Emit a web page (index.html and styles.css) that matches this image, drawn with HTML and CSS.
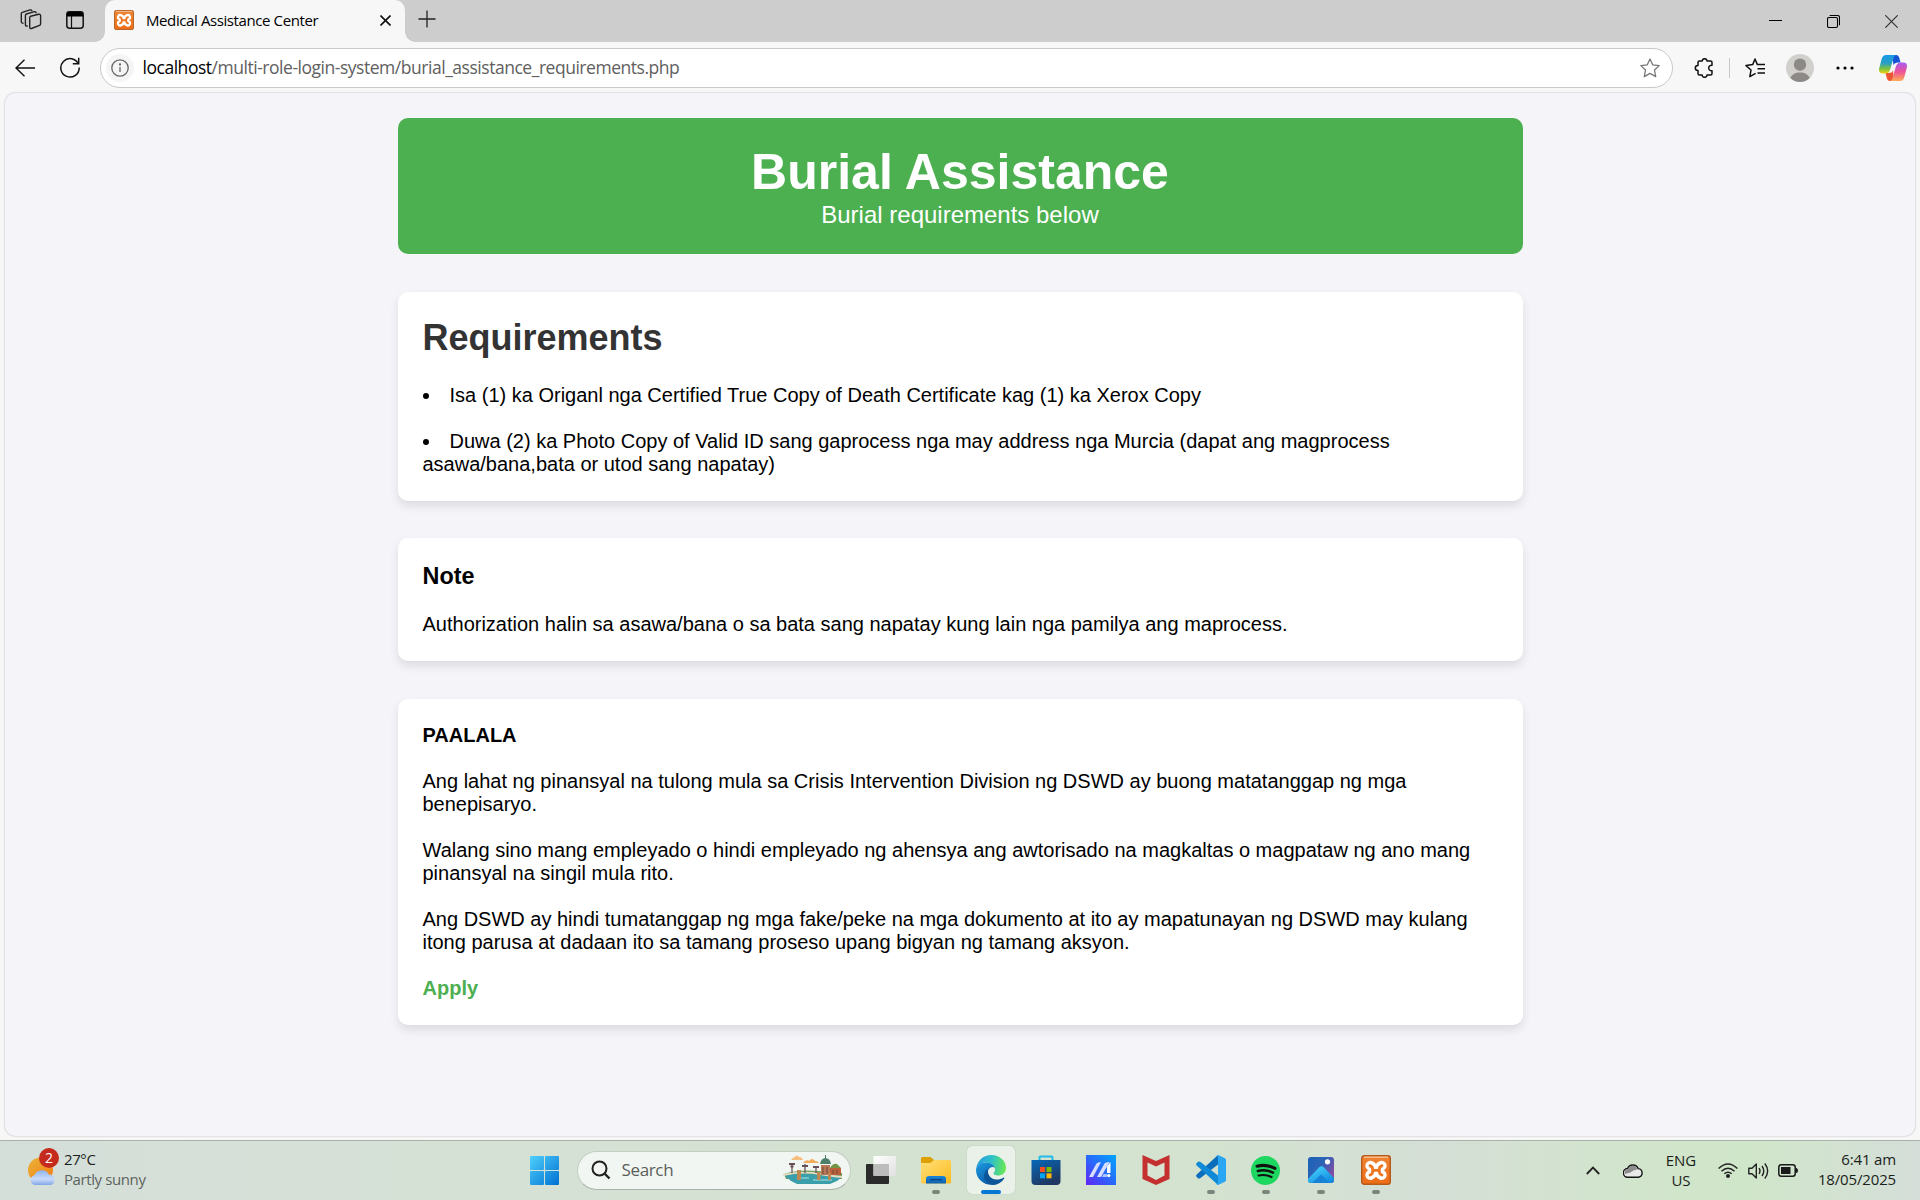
FILE: index.html
```html
<!DOCTYPE html>
<html lang="en">
<head>
<meta charset="utf-8">
<title>Medical Assistance Center</title>
<link rel="stylesheet" href="styles.css">
</head>
<body>
<svg class="defs" aria-hidden="true">
  <defs>
    <linearGradient id="orange" x1="0" y1="0" x2="0" y2="1"><stop offset="0" stop-color="#ee8433"/><stop offset="1" stop-color="#ee6c16"/></linearGradient>
    <symbol id="xampp" viewBox="0 0 30 30">
      <rect x=".7" y=".7" width="28.6" height="28.6" rx="2.5" fill="url(#orange)" stroke="#b65a1c" stroke-width="1.4"/>
      <path d="M3 2.2H27" stroke="#f8c092" stroke-width="1.4"/>
      <path d="M9.300 10.700Q12 11.700 11.800 15.300 12 19 9.300 20M20.700 10.700Q18 11.700 18.200 15.300 18 19 20.700 20M11.800 15.300H18.200" fill="none" stroke="#fff" stroke-width="10" stroke-linecap="round" stroke-linejoin="round"/>
      <path d="M9 10.700Q12 11.700 11.800 15.300 12 19 9 20M21 10.700Q18 11.700 18.200 15.300 18 19 21 20M11.800 15.300H18.200" fill="none" stroke="#ee7722" stroke-width="2.800" stroke-linecap="round" stroke-linejoin="round"/>
    </symbol>
  </defs>
</svg>

<div class="titlebar">
  <svg class="workspaces" width="22" height="22" viewBox="0 0 22 22" fill="none" stroke="#222" stroke-width="1.4" stroke-linejoin="round" stroke-linecap="round">
    <path d="M10.500 7.300 18.800 5.200q1.700-.2 1.800 1.400V14.700q0 1.200-1 1.600L11.400 19.500q-1.600.4-1.700-1.200V8.600q0-1 .8-1.300Z"/>
    <path d="M7.200 17q-1.700.3-1.800-1.300V6.400q0-1 1-1.400L14.400 2.700q1.400-.2 1.800 1"/>
    <path d="M3 14.300q-1.600 0-1.700-1.500V4.800q0-1.200 1-1.500L10 .9q1.500-.2 1.900.8"/>
  </svg>
  <svg class="tab-actions" width="18" height="18" viewBox="0 0 18 18"><rect x=".8" y=".8" width="16.400" height="16.400" rx="2.700" fill="none" stroke="#111" stroke-width="1.500"/><path d="M1 5.500V3a2 2 0 0 1 2-2H15a2 2 0 0 1 2 2V5.500Z" fill="#000"/><path d="M5.500 5V17" stroke="#111" stroke-width="1.200"/></svg>
  <div class="tab">
    <svg width="20" height="20"><use href="#xampp"/></svg>
    <span class="tab-title">Medical Assistance Center</span>
    <svg width="11" height="11" viewBox="0 0 11 11" stroke="#111" stroke-width="1.600"><path d="M.5.5 10.500 10.500M10.500.5.5 10.500"/></svg>
  </div>
  <svg class="new-tab" width="18" height="18" viewBox="0 0 18 18" stroke="#222" stroke-width="1.300"><path d="M9 .5V17.500M.5 9H17.500"/></svg>
  <div class="window-buttons">
    <svg width="13" height="13" viewBox="0 0 13 13" stroke="#000" stroke-width="1"><path d="M0 5.500H13"/></svg>
    <svg width="13" height="13" viewBox="0 0 13 13" fill="none" stroke="#000" stroke-width="1.100"><rect x=".5" y="2.500" width="10" height="10" rx="1.500"/><path d="M2.700.5H10.500a2 2 0 0 1 2 2V10.300"/></svg>
    <svg width="13" height="13" viewBox="0 0 13 13" stroke="#333" stroke-width="1.200"><path d="M.3.3 12.700 12.700M12.700.3.300 12.700"/></svg>
  </div>
</div>

<div class="toolbar">
  <svg class="back" width="20" height="18" viewBox="0 0 20 18" fill="none" stroke="#111" stroke-width="1.400"><path d="M9.500.7 1 9 9.500 17.300M1 9H20"/></svg>
  <svg class="reload" width="20" height="21" viewBox="0 0 20 21" fill="none" stroke="#111" stroke-width="1.500"><path d="M18.500 7.300A9.200 9.200 0 1 0 19.200 10.500M18.700.8V6.700H12.800"/></svg>
  <div class="address">
    <span class="site-info"><svg width="18" height="18" viewBox="0 0 18 18" fill="none" stroke="#666" stroke-width="1.300"><circle cx="9" cy="9" r="8.200"/><path d="M9 8V13"/><circle cx="9" cy="5.500" r=".5"/></svg></span>
    <span class="url"><b>localhost</b>/multi-role-login-system/burial_assistance_requirements.php</span>
    <svg class="star" width="20" height="20" viewBox="0 0 20 20" fill="none" stroke="#777" stroke-width="1.300" stroke-linejoin="round"><path d="M10 1 12.700 6.800 19.200 7.600 14.500 12 15.700 18.600 10 15.400 4.300 18.600 5.500 12 .8 7.600 7.300 6.800Z"/></svg>
  </div>
  <svg class="extensions" width="20" height="20" viewBox="0 0 20 20" fill="none" stroke="#111" stroke-width="1.500" stroke-linejoin="round"><path d="M5.500 3H8.200C8.200-.1 13-.1 13 3H16.500Q18 3 18 4.500V7.300C13.600 7 13.600 13 18 12.700V15.500Q18 17 16.500 17H13C13 20.100 8.200 20.100 8.200 17H5.500Q4 17 4 15.500V12.500C.4 12.500.4 7.500 4 7.500V4.500Q4 3 5.500 3Z"/></svg>
  <span class="divider"></span>
  <svg class="favorites" width="21" height="20" viewBox="0 0 21 20" fill="none" stroke="#111" stroke-width="1.500" stroke-linejoin="round"><path d="M10.600 15.300 4.900 18.600 6 12 1 7.600 7.700 6.600 10 1 12.400 6.600H20M12.500 10.700H20M12.500 15H20"/></svg>
  <svg class="avatar" width="28" height="28" viewBox="0 0 28 28"><circle cx="14" cy="14" r="14" fill="#d2d0cd"/><circle cx="14" cy="10.700" r="6.200" fill="#8c8986"/><path d="M4.300 24C6 20.500 9 18.500 14 18.500S22 20.500 23.700 24A14 14 0 0 1 4.300 24Z" fill="#8c8986"/></svg>
  <svg class="more" width="18" height="4" viewBox="0 0 18 4"><circle cx="2" cy="2" r="1.600"/><circle cx="9" cy="2" r="1.600"/><circle cx="16" cy="2" r="1.600"/></svg>
  <svg class="copilot" width="28" height="26" viewBox="0 0 28 26">
    <defs>
      <linearGradient id="c1" x1="0" y1="0" x2="0" y2="1"><stop offset="0" stop-color="#1699e8"/><stop offset=".45" stop-color="#2b9fc4"/><stop offset=".75" stop-color="#7fc43b"/><stop offset="1" stop-color="#f4cf19"/></linearGradient>
      <linearGradient id="c2" x1="0" y1="0" x2="0" y2="1"><stop offset="0" stop-color="#a65df2"/><stop offset=".5" stop-color="#ec5397"/><stop offset="1" stop-color="#ffad55"/></linearGradient>
    </defs>
    <path d="M13 0H17.500Q19.500.2 20.200 2.400L21.500 7.500H18.500Q15.500 7.500 14.500 10Z" fill="#1554d4"/>
    <path d="M15 26H11Q8.500 26 7.900 23.500L6.500 18H10Q13 18 14 15.500Z" fill="#ec5632"/>
    <path d="M7 0H17Q15 .5 14.500 3L11.300 14Q10 18.500 6.500 18.500H3.500Q-1 18 .3 13L2.500 4.500Q3.600 0 7 0Z" fill="url(#c1)"/>
    <path d="M21 26H11Q13 25.500 13.500 23L16.700 12Q18 7.500 21.500 7.500H24.500Q29 8 27.700 13L25.500 21.500Q24.400 26 21 26Z" fill="url(#c2)"/>
  </svg>
</div>

<div class="viewport">
  <main class="container">
    <header class="banner">
      <h1>Burial Assistance</h1>
      <p>Burial requirements below</p>
    </header>
    <section class="card">
      <h2>Requirements</h2>
      <ul>
        <li>Isa (1) ka Origanl nga Certified True Copy of Death Certificate kag (1) ka Xerox Copy</li>
        <li>Duwa (2) ka Photo Copy of Valid ID sang gaprocess nga may address nga Murcia (dapat ang magprocess asawa/bana,bata or utod sang napatay)</li>
      </ul>
    </section>
    <section class="card">
      <h3>Note</h3>
      <p>Authorization halin sa asawa/bana o sa bata sang napatay kung lain nga pamilya ang maprocess.</p>
    </section>
    <section class="card">
      <h4>PAALALA</h4>
      <p>Ang lahat ng pinansyal na tulong mula sa Crisis Intervention Division ng DSWD ay buong matatanggap ng mga benepisaryo.</p>
      <p>Walang sino mang empleyado o hindi empleyado ng ahensya ang awtorisado na magkaltas o magpataw ng ano mang pinansyal na singil mula rito.</p>
      <p>Ang DSWD ay hindi tumatanggap ng mga fake/peke na mga dokumento at ito ay mapatunayan ng DSWD may kulang itong parusa at dadaan ito sa tamang proseso upang bigyan ng tamang aksyon.</p>
      <a class="apply">Apply</a>
    </section>
  </main>
</div>

<footer class="taskbar">
  <div class="weather">
    <div class="weather-icon">
      <svg width="28" height="28" viewBox="0 0 28 28">
        <defs><linearGradient id="sun" x1="0" y1="0" x2="1" y2="1"><stop offset="0" stop-color="#e9b53a"/><stop offset="1" stop-color="#f57a12"/></linearGradient><linearGradient id="cl" x1="0" y1="0" x2="0" y2="1"><stop offset="0" stop-color="#8fb4f0"/><stop offset=".6" stop-color="#cadcfa"/><stop offset="1" stop-color="#82a6e8"/></linearGradient></defs>
        <circle cx="12.500" cy="13" r="12.500" fill="url(#sun)"/>
        <path d="M7 28a5 5 0 0 1-.5-9.800 8 8 0 0 1 14.500-.6A5.300 5.300 0 0 1 22.500 28Z" fill="url(#cl)"/>
      </svg>
      <span class="badge">2</span>
    </div>
    <div class="weather-text"><span>27°C</span><span class="muted">Partly sunny</span></div>
  </div>

  <div class="apps">
    <div class="slot start">
      <svg width="29" height="29" viewBox="0 0 29 29"><defs><linearGradient id="win" gradientUnits="userSpaceOnUse" x1="0" y1="0" x2="29" y2="29"><stop offset="0" stop-color="#4fd0fc"/><stop offset="1" stop-color="#0070d2"/></linearGradient></defs><g fill="url(#win)"><rect width="14" height="14" rx="1"/><rect x="15" width="14" height="14" rx="1"/><rect y="15" width="14" height="14" rx="1"/><rect x="15" y="15" width="14" height="14" rx="1"/></g></svg>
    </div>
    <div class="search">
      <svg width="20" height="20" viewBox="0 0 20 20" fill="none" stroke="#222" stroke-width="2"><circle cx="8.500" cy="8.500" r="7"/><path d="M13.500 13.500 18.500 18.500" stroke-width="2.400"/></svg>
      <span>Search</span>
      <svg class="scene" width="60" height="30" viewBox="0 0 60 30">
        <path d="M8 5q2-3 4-3 1-3 4 0 3 0 4 3Z" fill="#f6bd7c"/><path d="M20 8q3-4 6-2 3-4 6 0 3 0 4 2Z" fill="#f5aa59"/>
        <path d="M1 19Q15 14 35 16L59 18V24H3Z" fill="#6f9d5a"/>
        <path d="M2 21Q12 17 27 19L59 22 54 26 47 29H14L8 26Z" fill="#3b9fab"/><path d="M14 23H26M30 25H49" stroke="#83ced0" stroke-width="1.500"/>
        <path d="M0 20Q19 16 37 19T59 22" fill="none" stroke="#e4dcc5" stroke-width="1.800"/>
        <path d="M9 9V18M22 9V18M33 12V18" stroke="#655" stroke-width="1.300"/><path d="M6 9H12M7.500 11.500H10.500M19 11H25M30 12H36" stroke="#655059" stroke-width="2.200"/>
        <path d="M38 10H47V20H38Z" fill="#ba7956"/><path d="M37 9Q38 3 42.500 3T48 9Z" fill="#4d806a"/><path d="M42.500 0V4" stroke="#4d806a"/><path d="M47 13H58V20H47Z" fill="#bd6039"/><path d="M47 13Q50 8 54 9L58 13Z" fill="#739345"/><path d="M40 12V19M44 12V19M50 15V19M54 15V19" stroke="#6b4841"/>
        <path d="M14 15h4v10h-4ZM34 17h3.500v8H34ZM45 18h3v7h-3Z" fill="#bc8953"/>
      </svg>
    </div>
    <div class="slot first-app">
      <svg width="30" height="30" viewBox="0 0 30 30"><defs><linearGradient id="tv" x1="0" y1="0" x2="1" y2="1"><stop offset="0" stop-color="#fff"/><stop offset="1" stop-color="#e0e0e0"/></linearGradient></defs><rect y="9" width="23" height="20" rx="1" fill="#2b2b2b"/><rect x="7.500" y="1" width="22.500" height="20" rx="1" fill="url(#tv)"/><path d="M7.500 9H23V21H7.500Z" fill="#bcbcbc"/></svg>
    </div>
    <div class="slot running">
      <svg width="30" height="30" viewBox="0 0 30 30"><defs><linearGradient id="fo" x1="0" y1="0" x2="1" y2="1"><stop offset="0" stop-color="#ffe07a"/><stop offset="1" stop-color="#fdbb1e"/></linearGradient><linearGradient id="fb" x1="0" y1="0" x2="0" y2="1"><stop offset="0" stop-color="#1784d8"/><stop offset="1" stop-color="#0f62b0"/></linearGradient></defs><path d="M0 3.500A1.500 1.500 0 0 1 1.500 2H9.500L13 5H28V14H0Z" fill="#dfa006"/><path d="M0 8H9.500L13 5H28.500Q30 5 30 6.500V28.500H1.500Q0 28.500 0 27Z" fill="url(#fo)"/><path d="M5 28.500V24a3 3 0 0 1 3-3H22a3 3 0 0 1 3 3V28.500Z" fill="url(#fb)"/><path d="M9 24.700H21" stroke="#0b3f78" stroke-width="1.200"/></svg>
    </div>
    <div class="slot running active">
      <svg width="30" height="30" viewBox="0 0 30 30"><defs><linearGradient id="e1" x1="0" y1=".5" x2="1" y2=".6"><stop offset="0" stop-color="#269bdc"/><stop offset=".5" stop-color="#2fc1c8"/><stop offset="1" stop-color="#6bea4d"/></linearGradient><linearGradient id="e2" x1="0" y1="0" x2=".6" y2="1"><stop offset="0" stop-color="#1b9de2"/><stop offset="1" stop-color="#0b59a8"/></linearGradient></defs>
        <path d="M.2 13.500C1.500 5 8 0 15 0 24 0 30 6 30 13 30 18 26 20.500 22 20.500 19 20.500 17.300 19.500 17.500 18.300 17.700 17.500 19 16.800 19 14.500 19 11.500 15.500 7.500 9.500 7.500 5.500 7.500 2 9.700.2 13.500Z" fill="url(#e1)"/>
        <path d="M9.500 7.500C15 7.500 18 10.500 18.700 12.700 16 10.800 12 13.500 11.500 17.500 11 23 16 28 19.500 29.200 10 32 0 25 0 15 0 11 4.500 7.500 9.500 7.500Z" fill="url(#e2)"/>
        <path d="M12.500 13.700C10.500 18 14 24.500 20.500 24.500 23.500 24.500 25.700 23.600 27.400 22.700 28.200 22.300 28.600 23 28.200 23.600 26 27 22 30 17 30 11 29 7 24 8.500 18.700 9.100 16.500 10.500 14.800 12.500 13.700Z" fill="#0c5598"/></svg>
    </div>
    <div class="slot">
      <svg width="30" height="30" viewBox="0 0 30 30"><defs><linearGradient id="st" x1="0" y1="0" x2=".5" y2="1"><stop offset="0" stop-color="#0668b8"/><stop offset="1" stop-color="#203761"/></linearGradient></defs><path d="M8.500 7V2.500Q8.500 1.500 9.500 1.500H20.500Q21.500 1.500 21.500 2.500V7" fill="none" stroke="#21bbe9" stroke-width="2"/><path d="M.5 5H29.500V26q0 4-4 4H4.500q-4 0-4-4Z" fill="url(#st)"/><path d="M9 12h5v5H9Z" fill="#f25022"/><path d="M15.500 12h5v5h-5Z" fill="#7fba00"/><path d="M9 18.300h5v5H9Z" fill="#00a4ef"/><path d="M15.500 18.300h5v5h-5Z" fill="#ffb900"/></svg>
    </div>
    <div class="slot">
      <svg width="30" height="30" viewBox="0 0 30 30"><defs><linearGradient id="ma" x1="0" y1="1" x2="1" y2="0"><stop offset="0" stop-color="#6324f5"/><stop offset=".55" stop-color="#2370fb"/><stop offset="1" stop-color="#02a5ff"/></linearGradient></defs><rect width="30" height="30" fill="url(#ma)"/><path d="M3 22 10.500 8.500Q12 7 15 7L7 22ZM11 22 18.500 8.500Q20.500 6.500 23.500 7L15 22Z" fill="#d9ddff"/><path d="M21 11.500 24.500 7V18H21Z" fill="#fff"/><path d="M17.500 19h3.500v3h-5Z" fill="#a9c5ff"/><circle cx="22.800" cy="20.600" r="1.600" fill="#fff"/></svg>
    </div>
    <div class="slot">
      <svg width="28" height="30" viewBox="0 0 28 30"><path d="M.5 0 14 6 27.500 0V24L14 30 .5 24Z" fill="#c4302f"/><path d="M5.500 7.500 14 11.500 22.500 7.500V20.500L14 25 5.500 20.500Z" fill="#d7e4d2"/></svg>
    </div>
    <div class="slot running">
      <svg width="30" height="30" viewBox="0 0 30 30"><path d="M22 0 24 8 4.500 23Q3 24 1.700 23L.5 21.800Q-.3 20.700.7 19.500Z" fill="#0a6ebd"/><path d="M22 30 24 22 4.500 7Q3 6 1.700 7L.5 8.200Q-.3 9.300.7 10.500Z" fill="#1089d6"/><path d="M22 0 29 3.200Q30 3.800 30 5V25Q30 26.200 29 26.800L22 30Q21.200 30 20.500 29 22 29 22 27V3Q22 1 20.500 1 21.200 0 22 0Z" fill="#2ba6f3"/></svg>
    </div>
    <div class="slot running">
      <svg width="29" height="29" viewBox="0 0 29 29" fill="none" stroke="#111" stroke-linecap="round"><circle cx="14.500" cy="14.500" r="14.500" fill="#1ed760" stroke="none"/><path d="M6 10.200Q15.500 7.800 24 12.400" stroke-width="3"/><path d="M6.800 15Q15 13 22 16.700" stroke-width="2.500"/><path d="M7.500 19.500Q14.500 17.800 20.500 21" stroke-width="2"/></svg>
    </div>
    <div class="slot running">
      <svg width="26" height="26" viewBox="0 0 26 26"><defs><linearGradient id="p1" x1="0" y1="0" x2="1" y2=".7"><stop offset="0" stop-color="#1762b8"/><stop offset=".5" stop-color="#3063b5"/><stop offset="1" stop-color="#8d499f"/></linearGradient><linearGradient id="p2" x1="0" y1="0" x2=".8" y2="1"><stop offset="0" stop-color="#4bdcff"/><stop offset="1" stop-color="#1089df"/></linearGradient></defs><rect width="26" height="26" rx="3" fill="url(#p1)"/><path d="M0 22 11 10.500Q13.500 8 16 10.500L26 21V23Q26 26 23 26H3Q0 26 0 23Z" fill="url(#p2)"/><path d="M4 26 13 17.500 22 26Z" fill="#1683d8"/><circle cx="19.500" cy="4.800" r="2.600" fill="#fff"/></svg>
    </div>
    <div class="slot running"><svg width="30" height="30"><use href="#xampp"/></svg></div>
  </div>

  <div class="tray">
    <svg class="chevron" width="14" height="9" viewBox="0 0 14 9" fill="none" stroke="#222" stroke-width="1.800"><path d="M.8 8 7 1.600 13.200 8"/></svg>
    <svg class="cloud" width="20" height="14" viewBox="0 0 20 14"><path d="M5 13.300A4.300 4.300 0 0 1 4.500 4.500 5.800 5.800 0 0 1 15.200 4.600 4.400 4.400 0 0 1 15.500 13.300Z" fill="#e9e9e9" stroke="#161616" stroke-width="1.400"/><path d="M1.800 10Q1 5.500 5 5A5 5 0 0 1 14.500 5.200Q10 6 7.500 8.500Z" fill="#8d8d8d"/></svg>
    <div class="lang"><span>ENG</span><span>US</span></div>
    <svg class="wifi" width="20" height="15" viewBox="0 0 20 15" fill="none" stroke="#222" stroke-width="1.400"><path d="M.6 5.400Q10-3.600 19.400 5.400M3.500 8.300Q10 2.300 16.500 8.300M6.300 10.800Q10 7.600 13.700 10.800"/><circle cx="10" cy="13" r="1.300" fill="#222"/></svg>
    <svg class="speaker" width="21" height="18" viewBox="0 0 21 18" fill="none" stroke="#222" stroke-width="1.400" stroke-linejoin="round"><path d="M.8 6.300H4L8.300 2V16L4 11.700H.8ZM11 6.200Q13 9 11 11.800M14 4Q17.500 9 14 14M16.800 1.500Q22.500 9 16.800 16.500"/></svg>
    <svg class="battery" width="20" height="13" viewBox="0 0 20 13"><rect x=".8" y=".8" width="16.400" height="11.400" rx="2.500" fill="none" stroke="#1a1a1a" stroke-width="1.500"/><rect x="3" y="3" width="9.500" height="7" fill="#1a1a1a"/><path d="M17.500 4H18.500Q20 4.500 20 6.500T18.500 9H17.500Z" fill="#1a1a1a"/></svg>
    <div class="clock"><span>6:41 am</span><span>18/05/2025</span></div>
  </div>
</footer>
</body>
</html>
```
FILE: styles.css
```css
* { box-sizing: border-box; }
html, body { height: 100%; }
body {
  margin: 0;
  display: flex;
  flex-direction: column;
  overflow: hidden;
  background: #f7f7f7;
  font-family: "Open Sans", "Noto Sans", sans-serif;
  color: #000;
}
svg { display: block; flex: none; }
.defs { position: absolute; width: 0; height: 0; }

/* Browser tab strip */
.titlebar {
  flex: none;
  height: 42px;
  display: flex;
  align-items: center;
  background: #cdcdcd;
}
.workspaces { margin-left: 20px; margin-bottom: 2px; }
.tab-actions { margin-left: 24px; margin-bottom: 2px; }
.tab {
  position: relative;
  align-self: stretch;
  width: 300px;
  margin-left: 21px;
  padding: 0 14px 2px 9px;
  display: flex;
  align-items: center;
  background: #f7f7f7;
  border-radius: 10px 10px 0 0;
}
.tab::before, .tab::after {
  content: "";
  position: absolute;
  bottom: 0;
  width: 10px;
  height: 10px;
}
.tab::before { left: -10px; background: radial-gradient(circle at 0 0, #cdcdcd 9.500px, #f7f7f7 10px); }
.tab::after { right: -10px; background: radial-gradient(circle at 100% 0, #cdcdcd 9.500px, #f7f7f7 10px); }
.tab-title { flex: 1; margin-left: 12px; padding-bottom: 1px; font-size: 15px; letter-spacing: -.4px; white-space: nowrap; }
.new-tab { margin-left: 13px; margin-bottom: 4px; }
.window-buttons { margin-left: auto; margin-right: 22px; display: flex; gap: 45px; }

/* Navigation bar */
.toolbar { flex: none; height: 51px; display: flex; align-items: center; }
.back { margin-left: 15px; }
.reload { margin-left: 25px; }
.address {
  width: 1573px;
  height: 40px;
  margin-left: 20px;
  padding: 0 12px 0 5px;
  display: flex;
  align-items: center;
  background: #fff;
  border: 1px solid #c9c9c9;
  border-radius: 20px;
}
.site-info { width: 28px; height: 28px; border-radius: 50%; background: #f5f5f5; display: grid; place-items: center; }
.url { margin-left: 8.500px; padding-bottom: 1px; font-size: 17.500px; letter-spacing: -.47px; color: #606060; white-space: nowrap; }
.url b { font-weight: 400; color: #000; }
.star { margin-left: auto; }
.extensions { margin-left: 21px; }
.divider { width: 1px; height: 20px; margin-left: 15px; background: #c8c8c8; }
.favorites { margin-left: 15px; }
.avatar { margin-left: 20px; }
.more { margin-left: 22px; }
.copilot { margin-left: 25px; }

/* Web page */
.viewport {
  flex: 1;
  min-height: 0;
  margin: 0 5px 4px;
  padding-top: 25px;
  background: #f4f4f9;
  border-radius: 10px;
  box-shadow: 0 0 2px rgba(0, 0, 0, .3);
}
.container {
  width: 1125px;
  margin: 0 auto;
  display: flex;
  flex-direction: column;
  gap: 37.500px;
  font: 20px/23px "Liberation Sans", Arial, sans-serif;
}
.container :is(h1, h2, h3, h4, p, ul) { margin: 0; }
.banner {
  height: 136px;
  padding: 25px;
  background: #4caf50;
  border-radius: 10px;
  color: #fff;
  text-align: center;
}
.banner h1 { font-size: 50px; line-height: 58px; }
.banner p { font-size: 24px; line-height: 28px; }
.card {
  padding: 25px;
  background: #fff;
  border-radius: 10px;
  box-shadow: 0 5px 10px rgba(0, 0, 0, .1);
}
.card h2 { margin-bottom: 26px; font-size: 36px; line-height: 41px; color: #333; }
.card h3 { margin-bottom: 23px; font-size: 23.400px; line-height: 27px; }
.card h4 { margin-bottom: 23px; font-size: 20px; }
.card p + p, .card li + li, .apply { margin-top: 23px; }
.card ul { padding: 0; list-style: disc inside; }
.apply { display: block; font-weight: 700; color: #4caf50; }

/* Windows taskbar */
.taskbar {
  flex: none;
  height: 60px;
  display: flex;
  align-items: stretch;
  border-top: 1px solid #a9b2aa;
  background: linear-gradient(90deg, #d5dfda, #d6e0d7 15%, #d4e2d1 45%, #d3e3cf 62%, #d5dfd6 75%, #d2e4cd 84%, #d0e6c9 91%, #d5ded9);
  font-size: 15px;
  line-height: 20px;
  color: #1b1f1b;
}
.weather { width: 516.500px; padding-left: 28px; display: flex; }
.weather-icon { position: relative; width: 28px; padding-top: 16px; }
.badge {
  position: absolute;
  left: 11px;
  top: 7px;
  width: 20px;
  height: 20px;
  border-radius: 50%;
  background: #c42b1c;
  color: #fff;
  text-align: center;
  font-size: 14px;
}
.weather-text { display: flex; flex-direction: column; margin-left: 8px; padding-top: 8px; letter-spacing: -.4px; }
.muted { color: #5c635d; }
.apps { display: flex; align-items: center; padding-bottom: 1px; }
.slot { position: relative; width: 55px; height: 48px; display: grid; place-items: center; }
.search {
  width: 274px;
  height: 39px;
  margin-left: 5px;
  padding: 0 7px 0 13px;
  display: flex;
  align-items: center;
  gap: 11px;
  border-radius: 20px;
  background: #f2f6f2;
  border: 1px solid #c3cec2;
  border-bottom-color: #a9b3a9;
  font-size: 17px;
  letter-spacing: -.35px;
  color: #5a5f5a;
}
.scene { margin-left: auto; }
.first-app { margin-left: 2.500px; }
.running::after {
  content: "";
  position: absolute;
  left: 23.500px;
  bottom: 0;
  width: 8px;
  height: 4px;
  border-radius: 2px;
  background: #7c857b;
}
.active::before {
  content: "";
  position: absolute;
  inset: 0 3.500px;
  border-radius: 5px;
  background: #eaf1e9;
  box-shadow: 0 0 1px #9aa59a;
}
.active svg { position: relative; }
.active::after { left: 17.500px; width: 20px; background: #0078d4; }
.tray { margin-left: auto; padding-right: 24px; display: flex; align-items: center; }
.cloud { margin-left: 23px; }
.lang { width: 40px; margin-left: 18px; padding-bottom: 2px; display: flex; flex-direction: column; text-align: center; }
.wifi { margin-left: 17px; }
.speaker { margin-left: 10px; }
.battery { margin-left: 9px; }
.clock { width: 88px; margin-left: 10px; padding-bottom: 4px; letter-spacing: -.15px; display: flex; flex-direction: column; align-items: flex-end; white-space: nowrap; }
```
